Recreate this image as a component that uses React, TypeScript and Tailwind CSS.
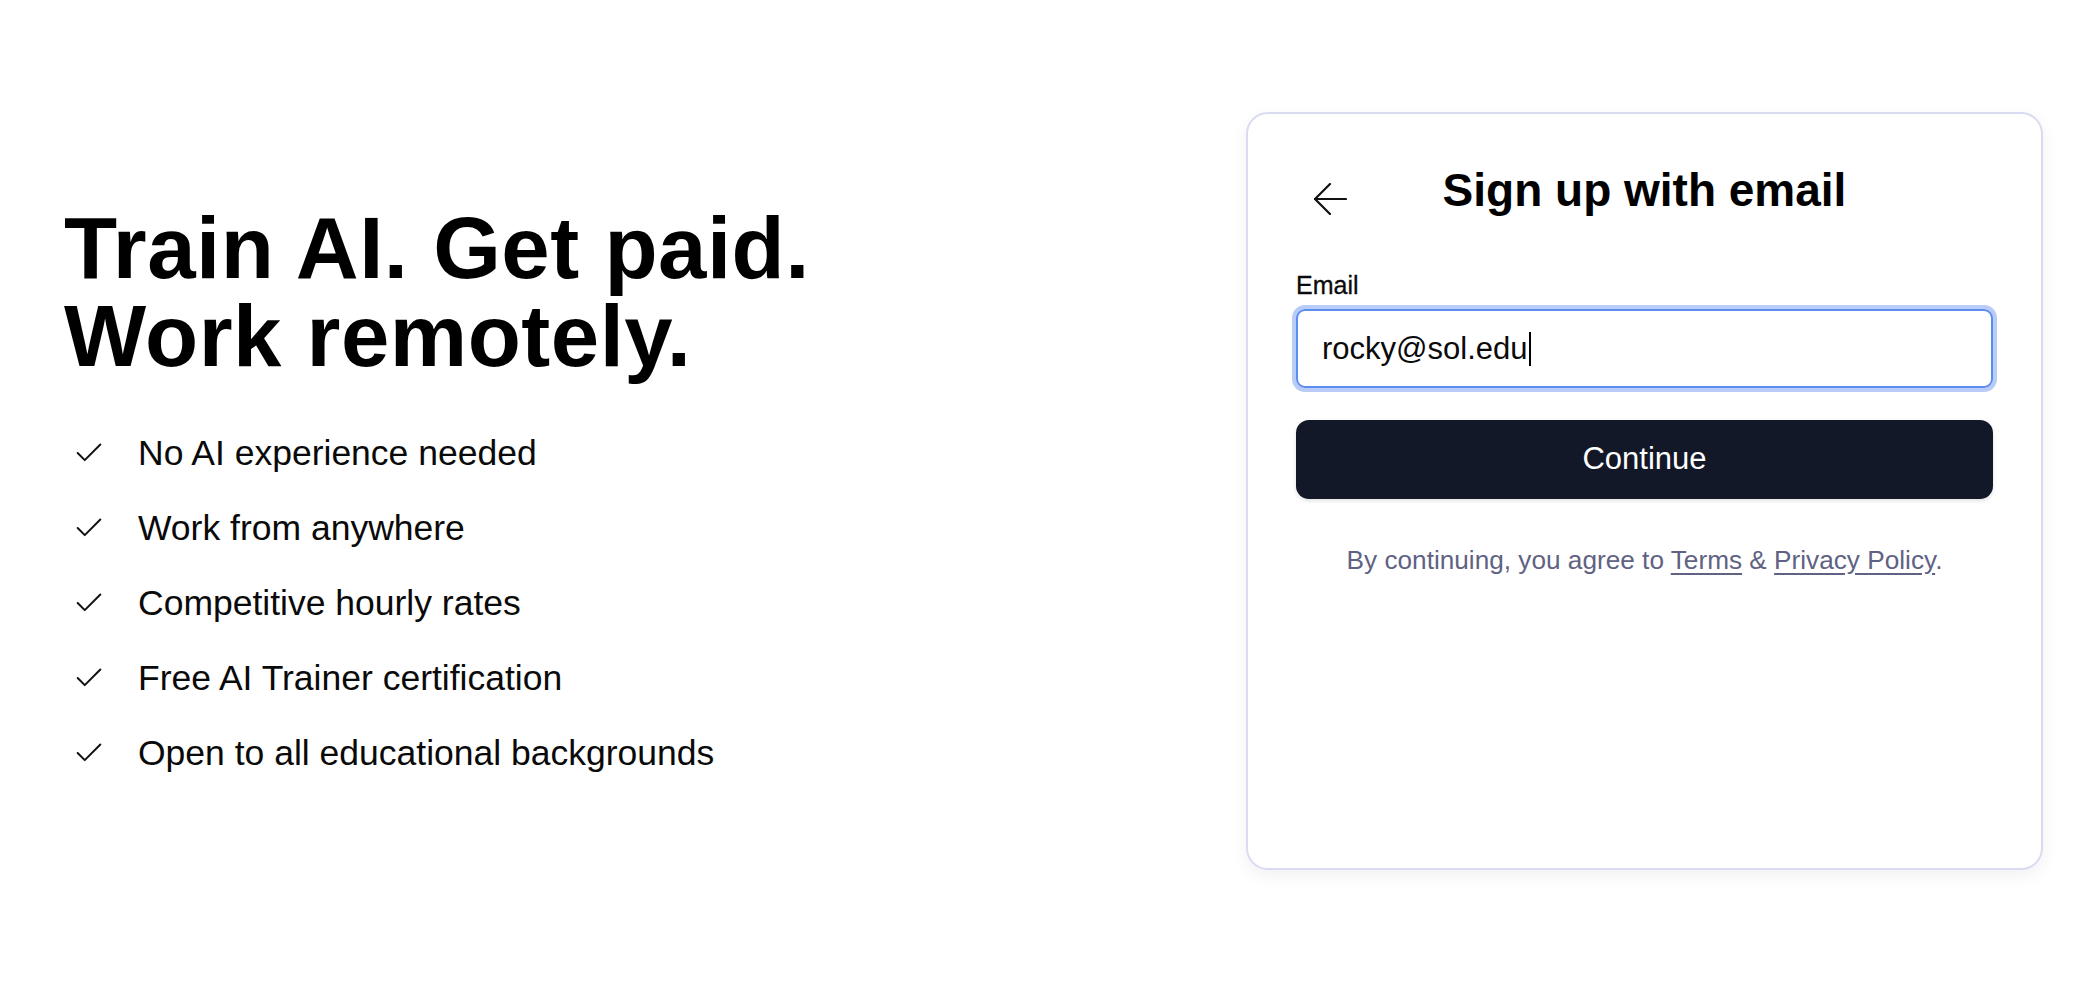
import React from 'react'

// Sign-up landing: pitch on the left, email form card on the right

const perks = [
  'No AI experience needed',
  'Work from anywhere',
  'Competitive hourly rates',
  'Free AI Trainer certification',
  'Open to all educational backgrounds',
]

const CheckIcon = () => (
  <svg width="34" height="34" viewBox="0 0 24 24" fill="none" stroke="#111" strokeWidth="1.4" strokeLinecap="round" strokeLinejoin="round">
    <path d="M20 6 9 17l-5-5" />
  </svg>
)

const BackArrow = () => (
  <svg width="34" height="32" viewBox="0 0 34 32" fill="none" stroke="#111" strokeWidth="2.2" strokeLinecap="round" strokeLinejoin="round">
    <path d="M33 16H2" />
    <path d="M17 1 2 16l15 15" />
  </svg>
)

export default function App() {
  const [email] = React.useState('rocky@sol.edu')

  return (
    <div className="flex h-[988px] w-full items-center justify-between bg-white pl-[64px] pr-[55px] text-black [font-family:'Liberation_Sans',Arial,sans-serif]">
      {/* Left pitch */}
      <div className="flex flex-col pt-[6px]">
        <h1 className="text-[87px] font-bold leading-[88px] tracking-[0.5px]">
          Train AI. Get paid.
          <br />
          Work remotely.
        </h1>
        <ul className="mt-[36px] flex flex-col">
          {perks.map(perk => (
            <li key={perk} className="flex h-[75px] items-center">
              <span className="ml-[8px] flex w-[66px] shrink-0">
                <CheckIcon />
              </span>
              <span className="text-[35.5px] leading-[44px] text-[#0a0a0a]">{perk}</span>
            </li>
          ))}
        </ul>
      </div>

      {/* Sign-up card */}
      <div className="mt-[-6px] flex h-[758px] w-[797px] flex-col rounded-[22px] border-2 border-[#d9dbf0] bg-white px-[48px] pt-[48px] shadow-[0_6px_18px_rgba(20,20,60,0.06)]">
        <div className="relative flex justify-center">
          <button className="absolute left-[17px] top-[21px] flex items-center">
            <BackArrow />
          </button>
          <h2 className="text-[46px] font-bold leading-[56px]">Sign up with email</h2>
        </div>

        <label className="mt-[52px] text-[25px] leading-[30px] text-[#0a0a0a] [-webkit-text-stroke:0.3px_#0a0a0a]">Email</label>
        <div className="mt-[9px] flex h-[79px] items-center rounded-[9px] border-2 border-[#5b8cf0] pl-[24px] shadow-[0_0_0_4px_#b9cbf8]">
          <span className="text-[31px] leading-[40px] text-[#0a0a0a]">{email}</span>
          <span className="ml-[1px] h-[34px] w-[2px] bg-black" />
        </div>

        <button className="mt-[32px] flex h-[79px] items-center justify-center rounded-[13px] bg-[#131829] text-[31px] text-white shadow-[0_2px_4px_rgba(0,0,0,0.12)]">
          Continue
        </button>

        <p className="mt-[43px] text-center text-[26.2px] leading-[36px] text-[#5f6283]">
          By continuing, you agree to{' '}
          <a className="underline underline-offset-4" href="#">Terms</a>
          {' '}&amp;{' '}
          <a className="underline underline-offset-4" href="#">Privacy Policy</a>.
        </p>
      </div>
    </div>
  )
}
